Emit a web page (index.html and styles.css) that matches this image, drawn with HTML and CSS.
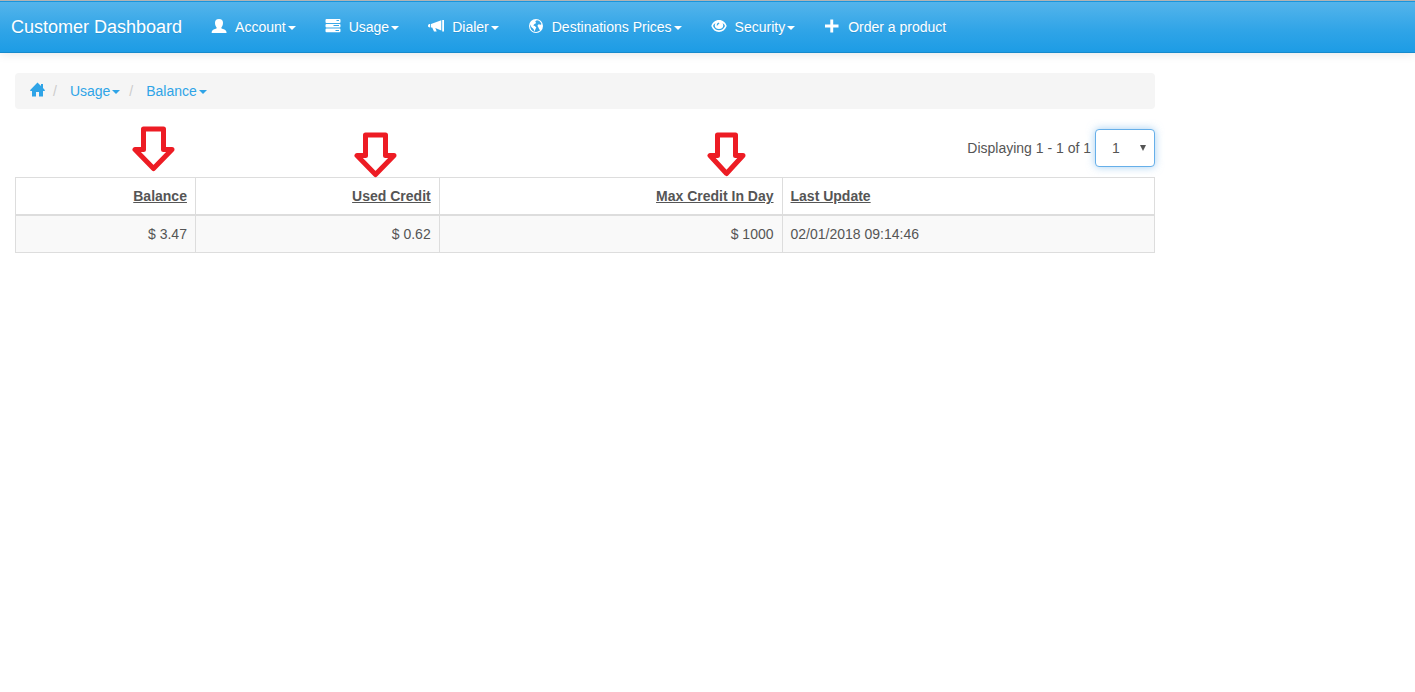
FILE: index.html
```html
<!DOCTYPE html>
<html lang="en">
<head>
<meta charset="utf-8">
<title>Customer Dashboard</title>
<link rel="stylesheet" href="styles.css">
</head>
<body>
<nav class="navbar">
  <a class="brand" href="#">Customer Dashboard</a>
  <ul class="nav">
    <li><a class="nav-link" href="#"><svg class="icon" viewBox="0 0 14 14"><path d="M7 0C9.800 0 11 1.400 11 3.800C11 5.800 10.300 7.400 9.400 8.400C9.200 9.400 9.800 9.700 11 10C13 10.700 14.500 11.200 14.600 14H-.400C-.300 11.200 1 10.700 3 10C4.200 9.700 4.800 9.400 4.600 8.400C3.700 7.400 3 5.800 3 3.800C3 1.400 4.200 0 7 0Z"/></svg><span class="label">Account<i class="caret"></i></span></a></li>
    <li><a class="nav-link" href="#"><svg class="icon" viewBox="0 0 14 14"><path fill-rule="evenodd" d="M.500 0H13.500Q14.500 0 14.500 1V3Q14.500 4 13.500 4H.500Q-.500 4-.500 3V1Q-.500 0 .500 0ZM10.500 1V2H13V1ZM.500 5H13.500Q14.500 5 14.500 6V7.500Q14.500 8.500 13.500 8.500H.500Q-.500 8.500-.500 7.500V6Q-.500 5 .500 5ZM7.500 6V7H13V6ZM.500 9.500H13.500Q14.500 9.500 14.500 10.500V12.200Q14.500 13.200 13.500 13.200H.500Q-.500 13.200-.500 12.200V10.500Q-.500 9.500 .500 9.500ZM9.500 11V12H13V11Z"/></svg><span class="label">Usage<i class="caret"></i></span></a></li>
    <li><a class="nav-link" href="#"><svg class="icon" viewBox="0 0 14 14"><path d="M13.200 1H15V12.500H13.200ZM12.300 1.200V11.600L6.300 9L7.700 12.600H5L3.200 8.600H2V5ZM1.200 5V8.400C-.300 8.400-1 7.800-1 6.700S-.300 5 1.200 5Z"/></svg><span class="label">Dialer<i class="caret"></i></span></a></li>
    <li><a class="nav-link" href="#"><svg class="icon" viewBox="0 0 14 14"><path fill-rule="evenodd" d="M7 0A7 7 0 1 1 7 14A7 7 0 1 1 7 0ZM7.800 1.300L6.200 2.600L7.200 4L5.200 5.200L4.300 6.500L5.800 7L7.300 8.500L6.500 10L5.500 12.500L4.500 10L2.300 8L1.300 5.500C.500 10 3.500 12.900 7 12.900C8.800 12.900 10.300 12 11.300 11L10.300 10.500L9.300 8.300L8.400 6.800L9.600 5.300L11.700 5.800L12.500 4.900C11.600 2.700 9.900 1.500 7.800 1.300Z"/></svg><span class="label">Destinations Prices<i class="caret"></i></span></a></li>
    <li><a class="nav-link" href="#"><svg class="icon" viewBox="0 0 14 14"><path fill-rule="evenodd" d="M7 1C10.800 1 13.600 3.500 14.700 7C13.200 10.700 10.500 13 7 13S.800 10.700-.700 7C.400 3.500 3.200 1 7 1ZM3.500 4C2.200 4.800 1.400 5.800 1 7C2.200 9.700 4.200 11.300 7 11.300S11.800 9.700 13 7C12.600 5.800 11.800 4.800 10.500 4C11 4.800 11.200 5.500 11.200 6.300A4.200 3.800 0 0 1 2.800 6.300C2.800 5.500 3 4.800 3.500 4ZM6.800 3.500Q4.500 4 4.600 6.500L6 6.300Q6 5 7.400 4.700Z"/></svg><span class="label">Security<i class="caret"></i></span></a></li>
    <li><a class="nav-link" href="#"><svg class="icon" viewBox="0 0 14 14"><path d="M5.300 .500H8.200V5.500H13.500V8.500H8.200V13.500H5.300V8.500H0V5.500H5.300Z"/></svg><span class="label">Order a product</span></a></li>
  </ul>
</nav>
<main class="container">
  <ol class="breadcrumb">
    <li><a href="#" aria-label="Home"><svg class="icon" viewBox="0 0 14 14"><path d="M7.500 -.500L11 3V1H13V5L15 7.300L14.500 8H13V13.500H9V9H6V13.500H2V8H.500L0 7.300Z"/></svg></a></li>
    <li><a href="#">Usage<i class="caret"></i></a></li>
    <li><a href="#">Balance<i class="caret"></i></a></li>
  </ol>
  <div class="pager">
    <label for="page">Displaying 1 - 1 of 1</label>
    <span class="select-box">
      <select id="page" class="page-select"><option>1</option></select>
      <i class="select-arrow"></i>
    </span>
  </div>
  <table class="table">
    <colgroup><col class="col-balance"><col class="col-used"><col class="col-max"><col></colgroup>
    <thead>
      <tr>
        <th class="num"><a href="#">Balance</a><svg class="marker marker-balance" viewBox="0 0 43 46"><path d="M11.500 3H31.500V23.500H40L21.500 42.500L3 23.500H11.500Z"/></svg></th>
        <th class="num"><a href="#">Used Credit</a><svg class="marker marker-used" viewBox="0 0 43 46"><path d="M11.500 3H31.500V23.500H40L21.500 42.500L3 23.500H11.500Z"/></svg></th>
        <th class="num"><a href="#">Max Credit In Day</a><svg class="marker marker-max" viewBox="0 0 39 45"><path d="M10.500 3H28.500V23.500H36L19.500 41.500L3 23.500H10.500Z"/></svg></th>
        <th><a href="#">Last Update</a></th>
      </tr>
    </thead>
    <tbody>
      <tr><td class="num">$ 3.47</td><td class="num">$ 0.62</td><td class="num">$ 1000</td><td>02/01/2018 09:14:46</td></tr>
    </tbody>
  </table>
</main>
</body>
</html>
```
FILE: styles.css
```css
* { box-sizing: border-box; }
body {
  margin: 0;
  background: #fff;
  color: #555;
  font: 14px/20px "Liberation Sans", Arial, sans-serif;
}
a { color: #2fa4e7; text-decoration: none; }
.icon { width: 14px; height: 14px; fill: currentColor; overflow: visible; flex: none; }
.caret {
  display: inline-block;
  margin-left: 2px;
  vertical-align: middle;
  border-top: 4px solid;
  border-left: 4px solid transparent;
  border-right: 4px solid transparent;
}
.navbar {
  display: flex;
  align-items: center;
  height: 53px;
  padding: 2px 0 0 11px;
  border-bottom: 1px solid #178acc;
  background: linear-gradient(#b3b3b3 1px, #1995dc 1px, #1995dc 2px, #54b4eb 2px, #2fa4e7 60%, #1d9ce5);
  box-shadow: 0 1px 10px rgba(0, 0, 0, 0.1);
}
.navbar a { color: #fff; text-shadow: 0 1px 0 rgba(0, 0, 0, 0.1); }
.brand { padding-right: 15px; font-size: 18px; white-space: nowrap; }
.nav { display: flex; margin: 0; padding: 0; list-style: none; }
.nav-link { display: flex; align-items: center; gap: 9px; padding: 15px; white-space: nowrap; }
.nav-link .icon { margin-bottom: 2px; }
.container { max-width: 1170px; padding: 20px 15px; }
.breadcrumb {
  display: flex;
  margin: 0 0 20px;
  padding: 8px 15px;
  list-style: none;
  background: #f5f5f5;
  border-radius: 4px;
}
.breadcrumb li + li::before { content: "/"; padding: 0 13px 0 9px; color: #ccc; }
.breadcrumb .icon { display: block; margin-top: 2px; }
.pager { display: flex; justify-content: flex-end; align-items: center; gap: 4px; margin-bottom: 10px; }
.select-box { position: relative; }
.page-select {
  display: block;
  appearance: none;
  width: 60px;
  height: 38px;
  padding: 0 16px;
  border: 1px solid #66afe9;
  border-radius: 4px;
  outline: none;
  background: #fff;
  color: #555;
  font: inherit;
  box-shadow: 0 0 8px rgba(102, 175, 233, 0.6);
}
.select-arrow {
  position: absolute;
  top: 16px;
  right: 9px;
  border-top: 6px solid #555;
  border-left: 3px solid transparent;
  border-right: 3px solid transparent;
  pointer-events: none;
}
.table { width: 100%; table-layout: fixed; border-collapse: collapse; }
.col-balance { width: 15.8%; }
.col-used { width: 21.4%; }
.col-max { width: 30.1%; }
.table th, .table td { padding: 8px; border: 1px solid #ddd; text-align: left; }
.table th { position: relative; border-bottom-width: 2px; }
.table th a { color: #555; text-decoration: underline; }
.table .num { text-align: right; }
.table tbody tr { background: #f9f9f9; }
.marker {
  position: absolute;
  width: 43px;
  height: 46px;
  fill: #fff;
  stroke: #ed1c24;
  stroke-width: 5px;
  stroke-linejoin: round;
}
.marker-balance { top: -52px; right: 20px; }
.marker-used { top: -46px; right: 42px; }
.marker-max { top: -46px; right: 36px; width: 39px; height: 45px; }
```
